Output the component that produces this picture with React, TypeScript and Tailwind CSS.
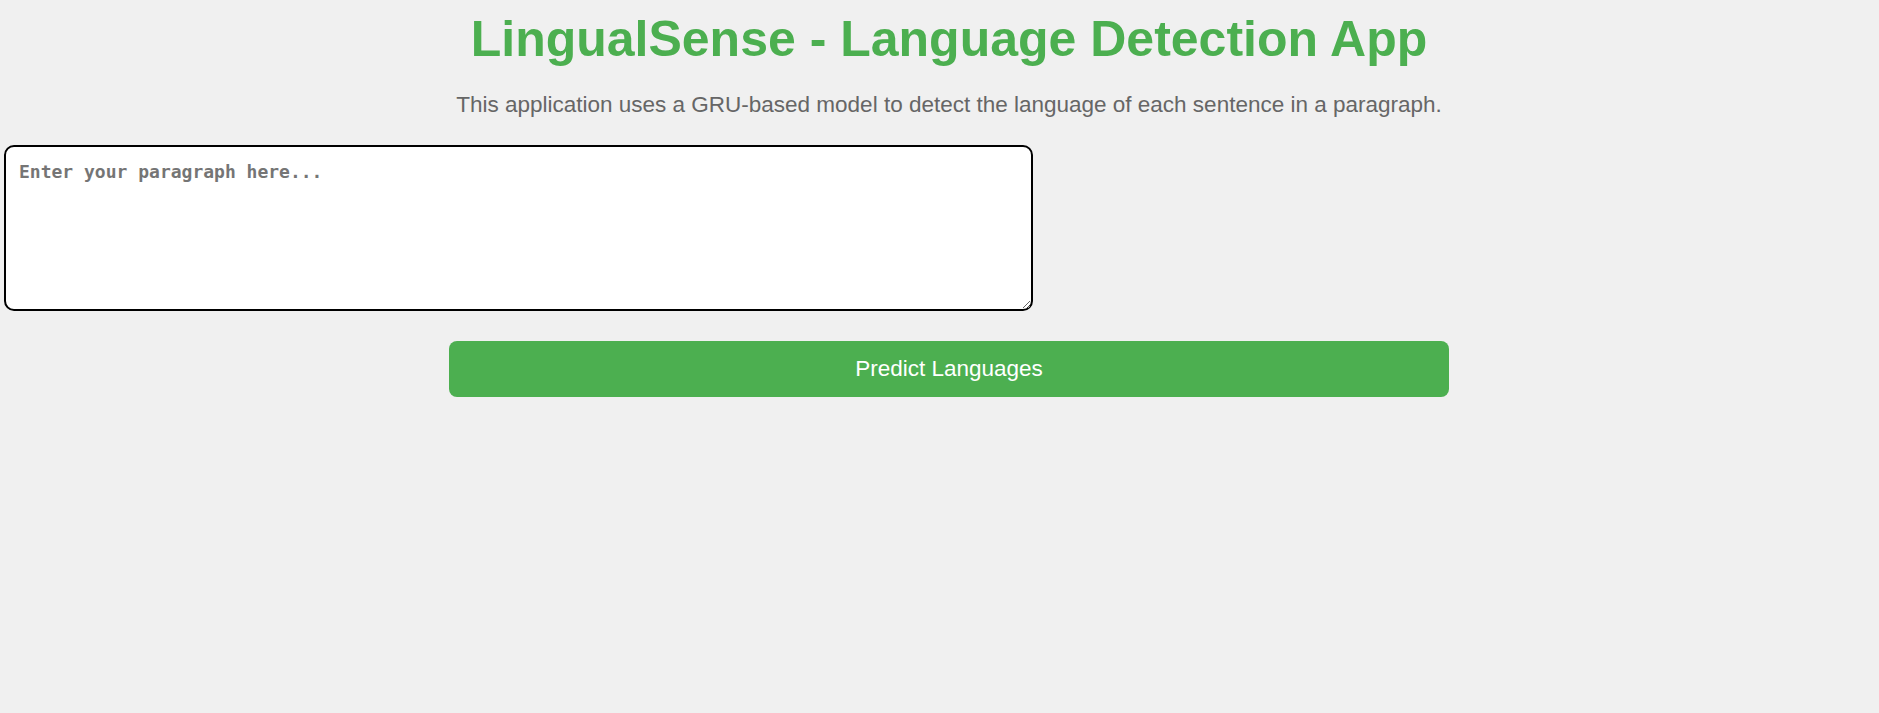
export default function App() {
  return (
    <div className="min-h-screen bg-[#f0f0f0] font-['Liberation_Sans',Arial,sans-serif]">
      <div className="pl-[19px] text-center">
        <h1 className="pt-[14px] text-[50px] leading-[50px] font-bold text-[#4caf50]">
          LingualSense - Language Detection App
        </h1>
        <p className="mt-[30px] text-[22.5px] leading-[22.5px] text-[#666666]">
          This application uses a GRU-based model to detect the language of each sentence in a paragraph.
        </p>
      </div>

      <div className="mt-[28.5px] pl-[4px]">
        <textarea
          placeholder="Enter your paragraph here..."
          className="block h-[166px] w-[1029px] rounded-[10px] border-2 border-black bg-white pl-[13px] pr-[11px] pt-[11px] pb-[12px] font-['DejaVu_Sans_Mono',monospace] text-[18px] font-bold text-black placeholder:text-[#757575]"
        />
      </div>

      <div className="mt-[30px] flex justify-center pl-[19px]">
        <button className="h-[56px] w-[1000px] rounded-[8px] bg-[#4caf50] text-[22.5px] text-white">
          Predict Languages
        </button>
      </div>
    </div>
  )
}
